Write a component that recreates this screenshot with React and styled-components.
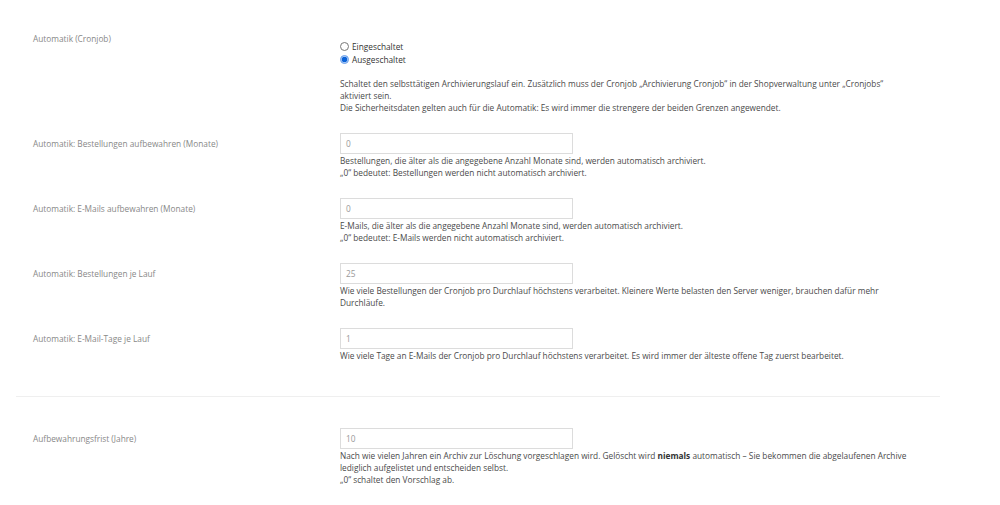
import React from "react";
import styled, { createGlobalStyle } from "styled-components";

const Global = createGlobalStyle`
  html, body { margin: 0; padding: 0; background: #fff; }
  body { font-family: "Open Sans", "Noto Sans", sans-serif; font-size: 8.3px; color: #555; }
`;

const Page = styled.div`
  width: 924px;
  padding: 33px 0 0 16px;
`;

const Row = styled.div`
  display: grid;
  grid-template-columns: 308px 1fr;
  margin-bottom: ${(p) => p.$gap ?? 19}px;
`;

const Label = styled.div`
  padding-left: 17px;
  color: #888;
  line-height: ${(p) => (p.$plain ? "12px" : "21px")};
  white-space: nowrap;
`;

const Content = styled.div`
  padding: ${(p) => (p.$radio ? "7px" : "0")} 25px 0 16px;
`;

const RadioLine = styled.label`
  display: flex;
  align-items: center;
  gap: 3px;
  height: 13px;
  color: #333;
`;

const RadioDot = styled.span`
  width: 9px;
  height: 9px;
  border-radius: 50%;
  box-sizing: border-box;
  border: 1px solid ${(p) => (p.$checked ? "#8ab4f0" : "#777")};
  background: ${(p) => (p.$checked ? "#0b63d8" : "#fff")};
  box-shadow: ${(p) => (p.$checked ? "inset 0 0 0 0.7px #cfe0fb" : "none")};
  flex: none;
`;

const Input = styled.div`
  width: 233px;
  height: 21px;
  box-sizing: border-box;
  border: 1px solid #dcdcdc;
  padding-left: 5px;
  display: flex;
  align-items: center;
  color: #999;
  background: #fff;
`;

const Help = styled.div`
  margin-top: ${(p) => p.$top ?? 1}px;
  line-height: 12px;
  color: #4a4a4a;
`;

const Strong = styled.strong`
  font-weight: 700;
  color: #333;
`;

const Sep = styled.hr`
  border: 0;
  border-top: 1px solid #efefef;
  margin: 0 0 31px 0;
  width: 924px;
`;

const fields = [
  {
    label: "Automatik: Bestellungen aufbewahren (Monate)",
    value: "0",
    help: [
      "Bestellungen, die älter als die angegebene Anzahl Monate sind, werden automatisch archiviert.",
      "„0“ bedeutet: Bestellungen werden nicht automatisch archiviert.",
    ],
  },
  {
    label: "Automatik: E-Mails aufbewahren (Monate)",
    value: "0",
    help: [
      "E-Mails, die älter als die angegebene Anzahl Monate sind, werden automatisch archiviert.",
      "„0“ bedeutet: E-Mails werden nicht automatisch archiviert.",
    ],
  },
  {
    label: "Automatik: Bestellungen je Lauf",
    value: "25",
    help: [
      "Wie viele Bestellungen der Cronjob pro Durchlauf höchstens verarbeitet. Kleinere Werte belasten den Server weniger, brauchen dafür mehr Durchläufe.",
    ],
  },
  {
    label: "Automatik: E-Mail-Tage je Lauf",
    value: "1",
    help: [
      "Wie viele Tage an E-Mails der Cronjob pro Durchlauf höchstens verarbeitet. Es wird immer der älteste offene Tag zuerst bearbeitet.",
    ],
  },
];

export default function App() {
  return (
    <>
      <Global />
      <Page>
        <Row>
          <Label $plain>Automatik (Cronjob)</Label>
          <Content $radio>
            <RadioLine>
              <RadioDot />
              Eingeschaltet
            </RadioLine>
            <RadioLine>
              <RadioDot $checked />
              Ausgeschaltet
            </RadioLine>
            <Help $top={12}>
              Schaltet den selbsttätigen Archivierungslauf ein. Zusätzlich muss der Cronjob „Archivierung Cronjob“ in der
              Shopverwaltung unter „Cronjobs“ aktiviert sein.
              <br />
              Die Sicherheitsdaten gelten auch für die Automatik: Es wird immer die strengere der beiden Grenzen angewendet.
            </Help>
          </Content>
        </Row>
        {fields.map((f, i) => (
          <Row key={f.label} $gap={i === fields.length - 1 ? 34 : 19}>
            <Label>{f.label}</Label>
            <Content>
              <Input>{f.value}</Input>
              <Help>
                {f.help.map((h, j) => (
                  <React.Fragment key={j}>
                    {j > 0 && <br />}
                    {h}
                  </React.Fragment>
                ))}
              </Help>
            </Content>
          </Row>
        ))}
        <Sep />
        <Row>
          <Label>Aufbewahrungsfrist (Jahre)</Label>
          <Content>
            <Input>10</Input>
            <Help>
              Nach wie vielen Jahren ein Archiv zur Löschung vorgeschlagen wird. Gelöscht wird <Strong>niemals</Strong>{" "}
              automatisch – Sie bekommen die abgelaufenen Archive lediglich aufgelistet und entscheiden selbst.
              <br />
              „0“ schaltet den Vorschlag ab.
            </Help>
          </Content>
        </Row>
      </Page>
    </>
  );
}
